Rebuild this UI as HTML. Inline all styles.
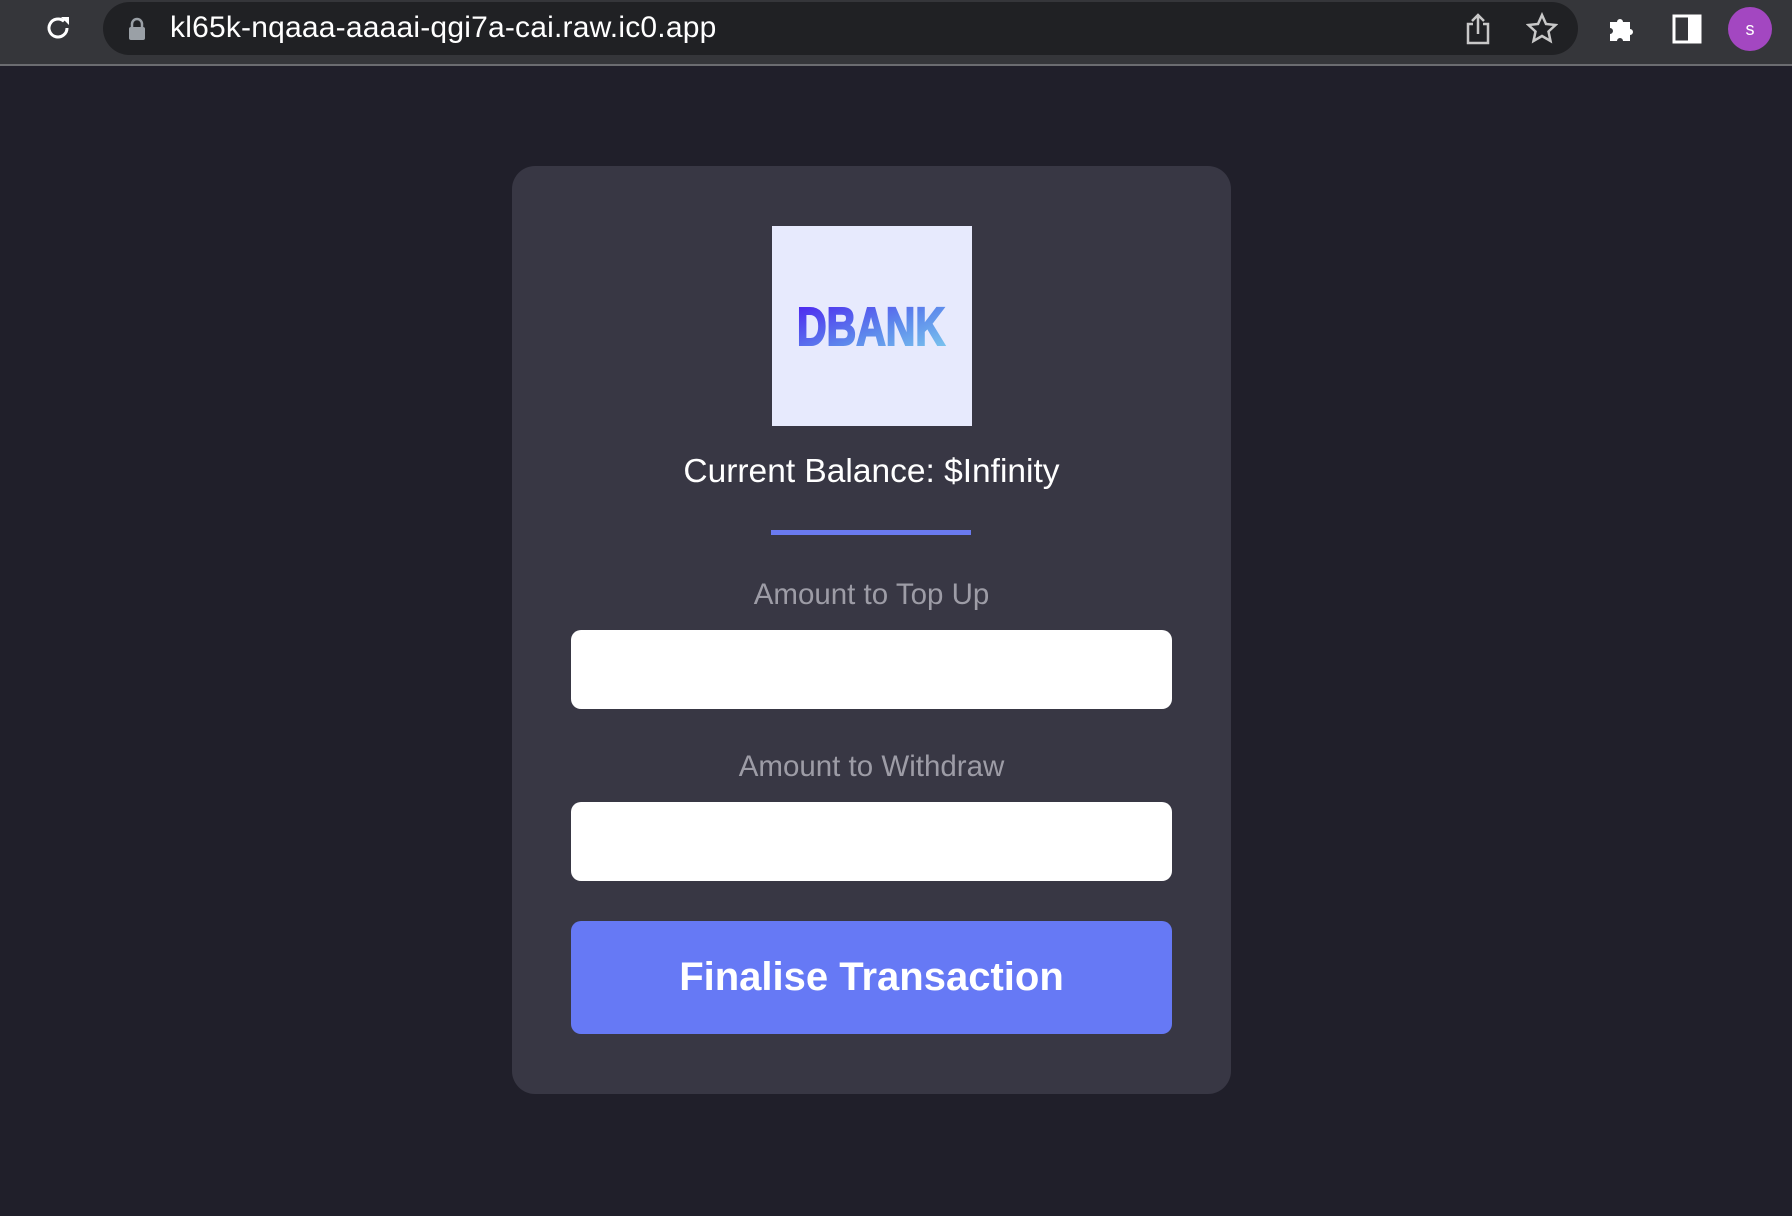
<!DOCTYPE html>
<html><head><meta charset="utf-8"><style>
html,body{margin:0;padding:0;width:1792px;height:1216px;overflow:hidden;background:#201f2a;font-family:"Liberation Sans",sans-serif}
.top{position:absolute;left:0;top:0;width:1792px;height:64px;background:#35363a;border-bottom:2px solid #6b6c70}
.pill{position:absolute;left:103px;top:2px;width:1475px;height:53px;border-radius:27px;background:#202124}
.url{position:absolute;left:170px;top:11px;color:#fff;font-size:30px;letter-spacing:.2px}
.card{position:absolute;left:512px;top:166px;width:719px;height:928px;border-radius:23px;background:#383744}
.logo{position:absolute;left:772px;top:226px;width:200px;height:200px;background:#e7eafd}
.bal{position:absolute;left:512px;width:719px;top:453px;text-align:center;color:#fff;font-size:33.5px}
.div{position:absolute;left:771px;top:530px;width:200px;height:5px;background:#6a7af0}
.lbl{position:absolute;left:512px;width:719px;text-align:center;color:#9d9ca6;font-size:29.5px}
.inp{position:absolute;left:571px;width:601px;height:79px;border-radius:10px;background:#fff}
.btn{position:absolute;left:571px;top:921px;width:601px;height:113px;border-radius:10px;background:#6679f5;color:#fff;font-weight:bold;font-size:40px;text-align:center;line-height:113px}
</style></head><body>
<div class="top">
 <svg style="position:absolute;left:42px;top:12px" width="32" height="32" viewBox="0 0 32 32"><path d="M25 16a9 9 0 1 1-3-6.7" fill="none" stroke="#fff" stroke-width="3"/><path d="M19 5h8v8z" fill="#fff"/></svg>
 <div class="pill"></div>
 <svg style="position:absolute;left:128px;top:17px" width="18" height="24" viewBox="0 0 18 24"><path d="M4 10V7a5 5 0 0 1 10 0v3" fill="none" stroke="#9aa0a6" stroke-width="2.5"/><rect x="1" y="10" width="16" height="13" rx="2" fill="#9aa0a6"/></svg>
 <div class="url">kl65k-nqaaa-aaaai-qgi7a-cai.raw.ic0.app</div>
 <svg style="position:absolute;left:1464px;top:12px" width="28" height="34" viewBox="0 0 28 34"><path d="M9 12H4v19h20V12h-5M14 22V3M8 9l6-6 6 6" fill="none" stroke="#c8c8c8" stroke-width="2.5"/></svg>
 <svg style="position:absolute;left:1526px;top:12px" width="32" height="32" viewBox="0 0 32 32"><path d="M16 3l4 9 9.5 1-7 6.5 2 9.5L16 24l-8.5 5 2-9.5-7-6.5 9.5-1z" fill="none" stroke="#c8c8c8" stroke-width="2.5"/></svg>
 <svg style="position:absolute;left:1606px;top:12px" width="32" height="32" viewBox="0 0 32 32"><path d="M4 10h7a3 3 0 1 1 6 0h7v7a3 3 0 1 1 0 6v6H17a3 3 0 1 0-6 0H4v-7a3 3 0 1 0 0-6z" fill="#fff"/></svg>
 <svg style="position:absolute;left:1672px;top:14px" width="30" height="30" viewBox="0 0 30 30"><rect x="2" y="2" width="26" height="26" fill="none" stroke="#fff" stroke-width="3"/><rect x="16" y="2" width="12" height="26" fill="#fff"/></svg>
 <div style="position:absolute;left:1728px;top:7px;width:44px;height:44px;border-radius:50%;background:#a347c1;color:#fff;font-size:18px;text-align:center;line-height:44px">s</div>
</div>
<div class="card"></div>
<div class="logo"><svg width="200" height="200" viewBox="0 0 200 200"><defs><linearGradient id="g" x1="0" y1="0" x2="1" y2="1"><stop offset="0" stop-color="#4a18f0"/><stop offset=".55" stop-color="#5d88ec"/><stop offset="1" stop-color="#7fd0ee"/></linearGradient></defs><text x="25" y="119" font-family="Liberation Sans" font-weight="bold" font-size="54" stroke="url(#g)" stroke-width="2" textLength="148" lengthAdjust="spacingAndGlyphs" fill="url(#g)">DBANK</text></svg></div>
<div class="bal">Current Balance: $Infinity</div>
<div class="div"></div>
<div class="lbl" style="top:578px">Amount to Top Up</div>
<div class="inp" style="top:630px"></div>
<div class="lbl" style="top:750px">Amount to Withdraw</div>
<div class="inp" style="top:802px"></div>
<div class="btn">Finalise Transaction</div>
</body></html>
